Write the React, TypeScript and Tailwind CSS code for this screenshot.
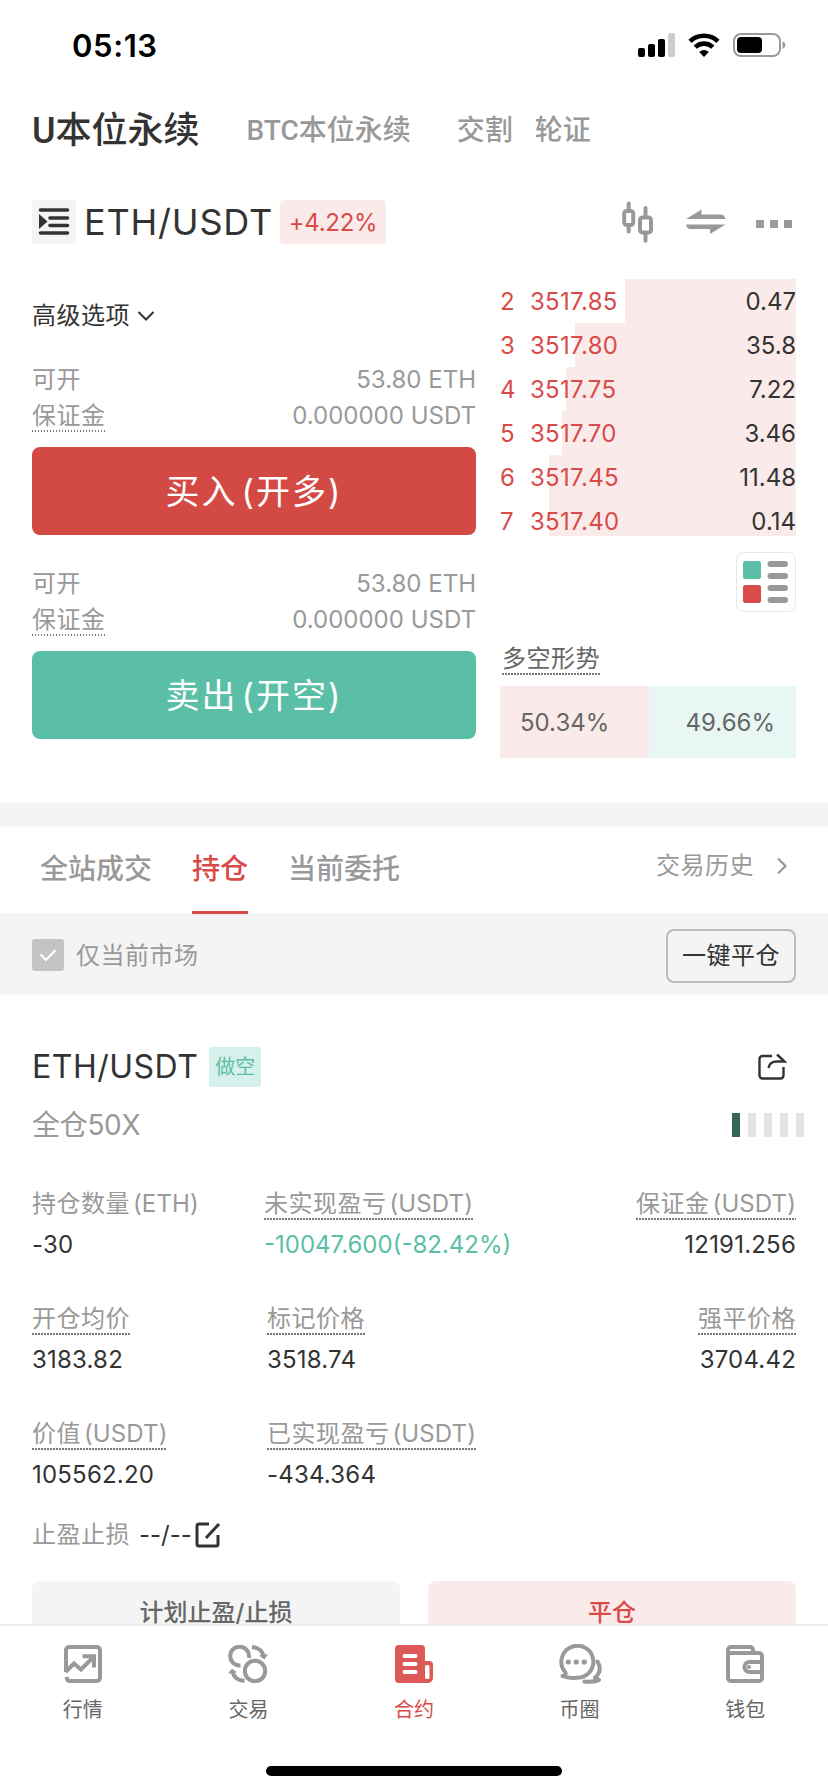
import { useState } from 'react';
import type { ReactNode } from 'react';
import clsx from 'clsx';

interface Ask {
  level: number;
  price: string;
  amount: string;
  depth: number;
}

const asks: Ask[] = [
  { level: 2, price: '3517.85', amount: '0.47', depth: 171 },
  { level: 3, price: '3517.80', amount: '35.8', depth: 221 },
  { level: 4, price: '3517.75', amount: '7.22', depth: 230 },
  { level: 5, price: '3517.70', amount: '3.46', depth: 234 },
  { level: 6, price: '3517.45', amount: '11.48', depth: 247 },
  { level: 7, price: '3517.40', amount: '0.14', depth: 247 },
];

const positionTabs = ['全站成交', '持仓', '当前委托'];

function Hint({ children, className }: { children: ReactNode; className?: string }) {
  return (
    <span
      className={clsx(
        'inline-block h-[31px] leading-[30px] whitespace-nowrap bg-[repeating-linear-gradient(90deg,#777_0_1.6px,transparent_1.6px_3px)] bg-[length:100%_2px] bg-bottom bg-no-repeat',
        className
      )}
    >
      {children}
    </span>
  );
}

function StatusBar() {
  return (
    <div className="h-[90px] shrink-0 flex items-center justify-between pl-[72px] pr-[42px]">
      <span className="text-[31px] font-semibold tracking-[0.6px] text-black leading-none">05:13</span>
      <div className="flex items-center">
        <svg width="37" height="24" viewBox="0 0 37 24">
          <rect x="0" y="15" width="7" height="9" rx="2" fill="#000" />
          <rect x="10" y="11" width="7" height="13" rx="2" fill="#000" />
          <rect x="20" y="6" width="7" height="18" rx="2" fill="#000" />
          <rect x="30" y="0" width="7" height="24" rx="2" fill="#ccc" />
        </svg>
        <svg width="32" height="24" viewBox="0 0 32 24" className="ml-[13px]" fill="none" stroke="#000" strokeWidth="4.6">
          <path d="M2 8.4a20 20 0 0 1 28 0" />
          <path d="M7.2 14.2a12.6 12.6 0 0 1 17.6 0" />
          <path d="M16 24l-4.8-5a7 7 0 0 1 9.6 0z" fill="#000" stroke="none" />
        </svg>
        <svg width="53" height="24" viewBox="0 0 53 24" className="ml-[13px]">
          <rect x="1" y="1" width="46" height="22" rx="7" fill="none" stroke="#9a9a9a" strokeWidth="2" />
          <rect x="4" y="4" width="25" height="16" rx="4" fill="#000" />
          <path d="M49.5 8q3 1.5 3 4t-3 4z" fill="#9a9a9a" />
        </svg>
      </div>
    </div>
  );
}

function MarketTabs() {
  return (
    <div className="h-20 shrink-0 flex items-center pl-8 pt-0.5 font-[Roboto,'Noto_Sans_CJK_SC',sans-serif] font-medium text-[28px] text-[#999] leading-none">
      <span className="text-[36px] text-[#333]">U本位永续</span>
      <span className="ml-[47px]">BTC本位永续</span>
      <span className="ml-[46px]">交割</span>
      <span className="ml-[22px]">轮证</span>
    </div>
  );
}

function SymbolBar() {
  return (
    <div className="mt-[30px] h-11 shrink-0 px-8 flex items-center">
      <div className="w-11 h-11 rounded bg-[#f4f4f4]">
        <svg width="44" height="44" viewBox="0 0 44 44" fill="none" stroke="#333" strokeWidth="3.6" strokeLinecap="round">
          <path d="M8.5 10H35.5M18 18H35.5M18 25.5H35.5M8.5 33H35.5" />
          <path d="M7 14L15.5 21.5L7 29Z" fill="#333" stroke="none" />
        </svg>
      </div>
      <span className="ml-2 text-[36px] tracking-[0.8px] leading-none text-[#333]">ETH/USDT</span>
      <span className="ml-[7px] h-11 w-[106px] pt-px flex items-center justify-center rounded bg-[#faebea] text-2xl tracking-[-0.3px] text-[#d84b49]">+4.22%</span>
      <svg className="ml-auto" width="32" height="42" viewBox="0 0 32 42" fill="none" stroke="#999" strokeWidth="4" strokeLinecap="round">
        <rect x="2.2" y="10" width="9" height="14" rx="2.5" />
        <path d="M6.7 2.5V9M6.7 25V30.5M23.5 7V15M23.5 33V39.8" />
        <rect x="18" y="16.5" width="11" height="15" rx="2.5" />
      </svg>
      <svg className="ml-8" width="40" height="26" viewBox="0 0 40 26" fill="#999">
        <path d="M0 10L15.5 .5V5.5H35Q38.5 5.5 39.5 10Z" />
        <path d="M39.5 15.5L24 25V20H4.5Q1 20 0 15.5Z" />
      </svg>
      <svg className="ml-[30px] mr-1 mt-1" width="36" height="8" viewBox="0 0 36 8" fill="#999">
        <path d="M0 0h8v8H0zM14 0h8v8h-8zM28 0h8v8h-8z" />
      </svg>
    </div>
  );
}

function OrderInfo({ className }: { className?: string }) {
  return (
    <div className={clsx('text-2xl text-[#999]', className)}>
      <div className="h-9 flex items-center justify-between">
        <span className="tracking-[0.5px]">可开</span>
        <span>53.80 ETH</span>
      </div>
      <div className="h-9 flex items-center justify-between">
        <Hint className="tracking-[0.5px]">保证金</Hint>
        <span>0.000000 USDT</span>
      </div>
    </div>
  );
}

function OrderForm() {
  return (
    <div className="w-[444px] flex flex-col">
      <div className="mt-14 h-8 flex items-center text-2xl tracking-[0.5px] text-[#333]">
        高级选项
        <svg className="ml-[7px]" width="18" height="12" viewBox="0 0 18 12" fill="none" stroke="#333" strokeWidth="2">
          <path d="M1.5 2L9 9.5L16.5 2" />
        </svg>
      </div>
      <OrderInfo className="mt-[30px]" />
      <button className="mt-[13px] h-[88px] rounded-lg bg-[#d34944] text-white text-[34px] tracking-[2px]">
        买入<span className="ml-1">(开多)</span>
      </button>
      <OrderInfo className="mt-[31px]" />
      <button className="mt-[13px] h-[88px] rounded-lg bg-[#5bbfa7] text-white text-[34px] tracking-[2px]">
        卖出<span className="ml-1">(开空)</span>
      </button>
    </div>
  );
}

function OrderBook() {
  return (
    <div className="w-[296px] flex flex-col">
      <div className="mt-[35px] h-[257px] overflow-hidden text-2xl">
        {asks.map((ask) => (
          <div key={ask.level} className="relative h-11 pt-0.5 flex items-center text-[#d84b49]">
            <div className="absolute right-0 inset-y-0 bg-[#faebea]" style={{ width: ask.depth }} />
            <span className="relative w-[30px]">{ask.level}</span>
            <span className="relative tracking-[0.3px]">{ask.price}</span>
            <span className="relative ml-auto text-[#333]">{ask.amount}</span>
          </div>
        ))}
      </div>
      <div className="mt-4 self-end w-[60px] h-[60px] rounded-lg border border-[#e8e8e8]">
        <svg width="58" height="58" viewBox="0 0 58 58" stroke="#999" strokeWidth="6" strokeLinecap="round">
          <rect x="6" y="8" width="18" height="18" rx="2.5" fill="#5bbfa7" stroke="none" />
          <rect x="6" y="32" width="18" height="18" rx="2.5" fill="#d84b49" stroke="none" />
          <path d="M33.5 11H48M33.5 23H48M33.5 35H48M33.5 47H48" />
        </svg>
      </div>
      <div className="mt-8 h-[31px] flex pl-0.5 text-2xl tracking-[0.5px] text-[#666]">
        <Hint>多空形势</Hint>
      </div>
      <div className="mt-[11px] h-[72px] flex items-center text-2xl text-[#666]">
        <div className="w-[149px] h-full flex items-center bg-[#faebea] pl-5 pt-0.5">50.34%</div>
        <div className="flex-1 h-full flex items-center justify-end bg-[#e8f7f4] pr-[21px] pt-0.5">49.66%</div>
      </div>
    </div>
  );
}

function PositionTabs() {
  const [active, setActive] = useState('持仓');

  return (
    <div className="h-[88px] shrink-0 flex pl-10 pr-8 border-b border-[#ececec]">
      <div className="flex gap-10">
        {positionTabs.map((tab) => (
          <button
            key={tab}
            onClick={() => setActive(tab)}
            className={clsx(
              'h-full text-[28px] font-medium border-b-[3px]',
              active === tab ? 'text-[#d84b49] border-[#d84b49]' : 'text-[#999] border-transparent'
            )}
          >
            {tab}
          </button>
        ))}
      </div>
      <div className="ml-auto pb-2.5 flex items-center text-2xl tracking-[0.5px] text-[#999]">
        交易历史
        <svg className="ml-[22px] mr-2" width="12" height="18" viewBox="0 0 12 18" fill="none" stroke="#999" strokeWidth="2.2">
          <path d="M2 1.5L9.5 9L2 16.5" />
        </svg>
      </div>
    </div>
  );
}

function FilterBar() {
  return (
    <div className="h-20 shrink-0 px-8 flex items-center bg-[#f4f4f4] text-2xl tracking-[0.5px]">
      <div className="w-8 h-8 rounded-[3px] bg-[#c4c4c4] flex items-center justify-center">
        <svg width="18" height="14" viewBox="0 0 18 14" fill="none" stroke="#fff" strokeWidth="2.2">
          <path d="M1.5 6.5L7 12L16.5 2" />
        </svg>
      </div>
      <span className="ml-3 pt-0.5 text-[#999]">仅当前市场</span>
      <button className="ml-auto mt-px w-[130px] h-[54px] pt-px rounded-lg border-2 border-[#bbb] tracking-[0.5px] text-[#333]">一键平仓</button>
    </div>
  );
}

interface CellProps {
  label: string;
  value: string;
  hint?: boolean;
  unit?: string;
  className?: string;
  valueClass?: string;
}

function Cell({ label, value, unit, hint = true, className, valueClass = 'text-[#333] tracking-[0.2px]' }: CellProps) {
  const text = (
    <>
      {label}
      {unit && <span className="ml-[3px] tracking-[0.1px]">({unit})</span>}
    </>
  );
  return (
    <div className={clsx('flex flex-col items-start text-2xl', className)}>
      <div className="h-[31px] text-[#999] tracking-[0.5px]">
        {hint ? <Hint>{text}</Hint> : <span className="leading-[30px]">{text}</span>}
      </div>
      <span className={clsx('mt-[11px] h-[30px] leading-[30px]', valueClass)}>{value}</span>
    </div>
  );
}

function Position() {
  return (
    <div className="shrink-0 px-8">
      <div className="mt-[52px] h-10 flex items-center">
        <span className="text-[32px] leading-none tracking-[0.5px] text-[#333]">ETH/USDT</span>
        <span className="ml-[11px] w-[52px] h-10 rounded-[3px] bg-[#d6f0eb] text-[#5bbfa7] text-xl flex items-center justify-center">做空</span>
        <svg className="ml-auto mr-[9px]" width="30" height="28" viewBox="0 0 30 28" fill="none" stroke="#333" strokeWidth="2.4">
          <path d="M15 3H5.5A3 3 0 0 0 2.5 6V22.5A3 3 0 0 0 5.5 25.5H23.5A3 3 0 0 0 26.5 22.5V14" />
          <path d="M11.5 15Q12.5 8.5 20 8.5H27.5L20 1.5" />
        </svg>
      </div>
      <div className="mt-5 h-9 flex items-center text-[28px] tracking-[-0.3px] text-[#999]">
        全仓50X
        <div className="ml-auto -mr-2 flex gap-2">
          <div className="w-2 h-6 bg-[#33694f]" />
          <div className="w-2 h-6 bg-[#e4e4e4]" />
          <div className="w-2 h-6 bg-[#e4e4e4]" />
          <div className="w-2 h-6 bg-[#e4e4e4]" />
          <div className="w-2 h-6 bg-[#e4e4e4]" />
        </div>
      </div>

      <div className="mt-[45px] flex">
        <Cell label="持仓数量" unit="ETH" value="-30" hint={false} className="w-[232px]" />
        <Cell label="未实现盈亏" unit="USDT" value="-10047.600(-82.42%)" valueClass="text-[#5bbfa7]" />
        <Cell label="保证金" unit="USDT" value="12191.256" className="ml-auto items-end!" />
      </div>
      <div className="mt-[43px] flex">
        <Cell label="开仓均价" value="3183.82" className="w-[235px]" />
        <Cell label="标记价格" value="3518.74" />
        <Cell label="强平价格" value="3704.42" className="ml-auto items-end!" />
      </div>
      <div className="mt-[43px] flex">
        <Cell label="价值" unit="USDT" value="105562.20" className="w-[235px]" />
        <Cell label="已实现盈亏" unit="USDT" value="-434.364" />
      </div>

      <div className="mt-[29px] h-8 flex items-center text-2xl text-[#333]">
        <span className="text-[#999] tracking-[0.5px]">止盈止损</span>
        <span className="ml-[9px]">--/--</span>
        <svg className="ml-[3px]" width="26" height="26" viewBox="0 0 26 26" fill="none" stroke="#333" strokeWidth="3">
          <path d="M14 2H4A2 2 0 0 0 2 4V22A2 2 0 0 0 4 24H21A2 2 0 0 0 23 22V13" />
          <path d="M11 16L24 2" />
        </svg>
      </div>

      <div className="mt-[30px] flex gap-7">
        <button className="flex-1 h-16 rounded-lg bg-[#f4f4f4] text-2xl font-medium text-[#666]">计划止盈/止损</button>
        <button className="flex-1 h-16 rounded-lg bg-[#faebea] text-2xl font-medium text-[#d84b49]">平仓</button>
      </div>
    </div>
  );
}

function MarketIcon() {
  return (
    <svg width="38" height="38" viewBox="0 0 38 38" fill="none" stroke="#999" strokeWidth="4">
      <path d="M2 27V5A3 3 0 0 1 5 2H33A3 3 0 0 1 36 5V33A3 3 0 0 1 33 36H6Q3 36 2.5 32" />
      <path d="M1.5 27L10 18.5L17 24.5L29 12.5" />
      <path d="M18.5 11.2H30V22.5" />
    </svg>
  );
}

function TradeIcon() {
  return (
    <svg width="40" height="38" viewBox="0 0 40 38" fill="none" stroke="#999" strokeWidth="4">
      <circle cx="27" cy="26" r="10.2" />
      <path d="M20.8 13A9.4 9.4 0 1 0 12.5 20.4" />
      <path d="M24 2Q33.5 3 35.5 11" />
      <path d="M16.5 36Q6.5 35 4.5 27" />
      <path d="M31 10.5L40 9L36.5 14.5Z" fill="#999" stroke="none" />
      <path d="M0 28.5L4 23.5L9 27.5Z" fill="#999" stroke="none" />
    </svg>
  );
}

function ContractIcon() {
  return (
    <svg width="38" height="38" viewBox="0 0 38 38">
      <path d="M4 0H26A4 4 0 0 1 30 4V16H34A4 4 0 0 1 38 20V33A5 5 0 0 1 33 38H4A4 4 0 0 1 0 34V4A4 4 0 0 1 4 0Z" fill="#dd5956" />
      <rect x="30" y="20" width="4.5" height="14" rx="1.5" fill="#fff" />
      <path d="M9.5 11H20.5M9.5 19H20.5M9.5 27H20.5" stroke="#fff" strokeWidth="4" strokeLinecap="round" />
    </svg>
  );
}

function CommunityIcon() {
  return (
    <svg width="44" height="40" viewBox="0 0 44 40" fill="none" stroke="#999" strokeWidth="4" strokeLinejoin="round" strokeLinecap="round">
      <path d="M4.5 32Q8.5 31 7.5 28.5A16 16 0 1 1 18.3 33.7Q10 34.5 4.5 32Z" />
      <path d="M39.5 17.5Q45 27 37 33.5L41 36Q34 38.5 26.5 37.5" />
      <g fill="#999" stroke="none">
        <circle cx="10.3" cy="18" r="2.6" />
        <circle cx="18.3" cy="18" r="2.6" />
        <circle cx="26.3" cy="18" r="2.6" />
      </g>
    </svg>
  );
}

function WalletIcon() {
  return (
    <svg width="38" height="38" viewBox="0 0 38 38" fill="none" stroke="#999" strokeWidth="4">
      <path d="M27 8V5A3 3 0 0 0 24 2H5A3 3 0 0 0 2 5V33A3 3 0 0 0 5 36H33A3 3 0 0 0 36 33V11A3 3 0 0 0 33 8H2" />
      <path d="M36 17H23.5A5 5 0 0 0 23.5 27H36" />
      <circle cx="23" cy="22" r="2" fill="#999" stroke="none" />
    </svg>
  );
}

const navItems = [
  { label: '行情', icon: <MarketIcon /> },
  { label: '交易', icon: <TradeIcon /> },
  { label: '合约', icon: <ContractIcon />, active: true },
  { label: '币圈', icon: <CommunityIcon /> },
  { label: '钱包', icon: <WalletIcon /> },
];

function BottomNav() {
  return (
    <div className="h-[168px] shrink-0 border-t-2 border-[#f0f0f0] bg-white flex flex-col items-center">
      <div className="w-full grid grid-cols-5 pt-[18px]">
        {navItems.map((item) => (
          <div key={item.label} className={clsx('flex flex-col items-center text-xl', item.active ? 'text-[#d84b49]' : 'text-[#666]')}>
            <div className="h-10 flex items-center">{item.icon}</div>
            <span className="mt-3 leading-7">{item.label}</span>
          </div>
        ))}
      </div>
      <div className="mt-auto mb-4 w-[296px] h-2.5 rounded-full bg-black" />
    </div>
  );
}

export default function App() {
  return (
    <div className="w-[828px] h-[1792px] overflow-hidden bg-white flex flex-col font-[Inter,'Noto_Sans_CJK_SC',sans-serif]">
      <div className="flex-1 min-h-0 overflow-hidden flex flex-col">
        <StatusBar />
        <MarketTabs />
        <SymbolBar />
        <div className="shrink-0 px-8 flex justify-between">
          <OrderForm />
          <OrderBook />
        </div>
        <div className="mt-[45px] h-6 shrink-0 bg-[#f4f4f4]" />
        <PositionTabs />
        <FilterBar />
        <Position />
      </div>
      <BottomNav />
    </div>
  );
}
